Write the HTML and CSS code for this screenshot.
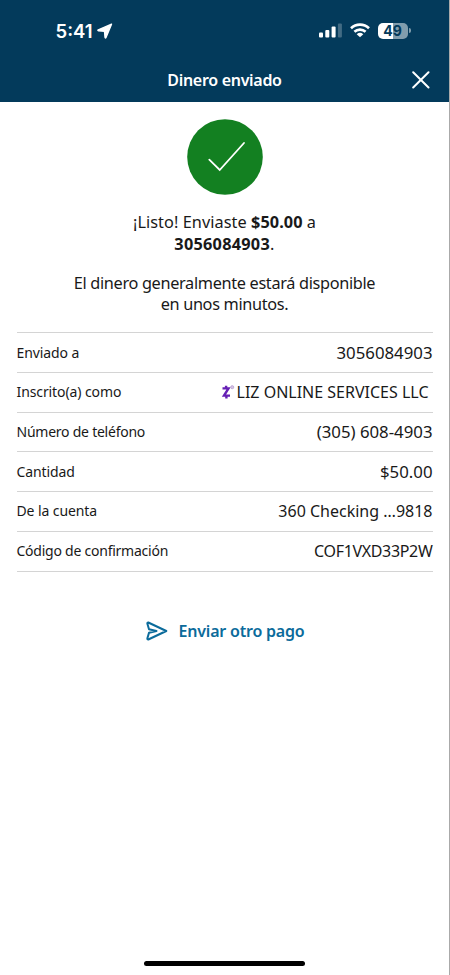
FILE: index.html
```html
<!DOCTYPE html>
<html lang="es">
<head>
<meta charset="utf-8">
<title>Dinero enviado</title>
<link rel="stylesheet" href="styles.css">
</head>
<body>
<div class="screen">
  <header class="header">
    <div class="status">
      <div class="clock"><span class="time">5:41</span>
        <svg class="location" width="16" height="16" viewBox="0 0 16 16"><path d="M14.5 1.2 1.3 6.8q-1 .6.2 1l6 .5.5 6q.4 1.3 1 .2z" fill="#fff" stroke="#fff" stroke-width="1.4" stroke-linejoin="round"/></svg>
      </div>
      <div class="indicators">
        <svg width="23" height="15" viewBox="0 0 23 15" fill="#fff"><rect x="0" y="9.5" width="4" height="5" rx="1"/><rect x="6.3" y="7" width="4" height="7.5" rx="1"/><rect x="12.6" y="3.5" width="4" height="11" rx="1"/><rect x="18.9" y=".5" width="4" height="14" rx="1" opacity=".25"/></svg>
        <svg class="wifi" width="20" height="15" viewBox="0 0 20 15"><g fill="none" stroke="#fff" stroke-width="2.6"><path d="M1 5.2a13 13 0 0 1 18 0"/><path d="M4.4 8.8a8.2 8.2 0 0 1 11.2 0"/></g><path d="M10 14.3 6.7 11.3a5 5 0 0 1 6.6 0z" fill="#fff"/></svg>
        <div class="battery"><span>4</span><span>9</span></div><i class="battery-tip"></i>
      </div>
    </div>
    <div class="titlebar">
      <span></span>
      <h1>Dinero enviado</h1>
      <svg width="18" height="18" viewBox="0 0 18 18"><path d="M1.2 1.2 16.5 16.5M16.5 1.2 1.2 16.5" stroke="#fff" stroke-width="2" stroke-linecap="round"/></svg>
    </div>
  </header>
  <main>
    <svg class="check" width="76" height="76" viewBox="0 0 76 76"><circle cx="38" cy="38" r="37.8" fill="#138021"/><path d="M22.3 40.7 32.7 51 57 24" fill="none" stroke="#fff" stroke-width="1.8" stroke-linecap="round"/></svg>
    <p class="message"><span class="intro">¡Listo! Enviaste <b>$50.00</b> a</span><br><span class="recipient"><b>3056084903</b>.</span></p>
    <p class="message note">El dinero generalmente estará disponible<br>en unos minutos.</p>
    <dl class="details">
      <div><dt>Enviado a</dt><dd class="number">3056084903</dd></div>
      <div><dt>Inscrito(a) como</dt><dd class="payee"><svg width="14" height="16" viewBox="0 0 14 16"><path d="M1.5 4.4H7.5L3 11.6H9M5.1 1.8V4.2M5.4 12V14.4" fill="none" stroke="#6620b5" stroke-width="2.4"/><circle cx="11.2" cy="3.2" r="1.6" fill="#d5c4e5" stroke="#ad92ca" stroke-width=".6"/></svg><span>LIZ ONLINE SERVICES LLC</span></dd></div>
      <div><dt class="tight">Número de teléfono</dt><dd class="number">(305) 608-4903</dd></div>
      <div><dt>Cantidad</dt><dd class="number">$50.00</dd></div>
      <div><dt>De la cuenta</dt><dd>360 Checking …9818</dd></div>
      <div><dt class="tight">Código de confirmación</dt><dd class="code">COF1VXD33P2W</dd></div>
    </dl>
    <a class="again"><svg width="22" height="20" viewBox="0 0 22 20"><path d="M2.3 1.5 20.3 10 2.3 18.5Q1.1 18.6 1.4 17.3L3 11.7 10.5 10 3 8.3 1.4 2.7Q1.1 1.4 2.3 1.5z" fill="none" stroke="#0b6b9b" stroke-width="2" stroke-linejoin="round"/></svg><span>Enviar otro pago</span></a>
  </main>
  <div class="home"></div>
</div>
</body>
</html>
```
FILE: styles.css
```css
* { box-sizing: border-box; }
body { margin: 0; background: #fff; font-family: "Noto Sans", sans-serif; color: #191919; }
.screen { width: 450px; height: 975px; display: flex; flex-direction: column; align-items: center; border-right: 1px solid #aaa; overflow: hidden; }
.header { width: 450px; height: 102px; flex: none; background: #033a5b; color: #fff; }
.status { height: 60px; padding: 1px 39px 0 56px; display: flex; justify-content: space-between; align-items: center; }
.clock { display: flex; align-items: center; gap: 4px; font: 600 18.5px/22px Inter, sans-serif; }
.indicators { display: flex; align-items: center; }
.wifi { margin: 0 8px; }
.battery { width: 30px; height: 16px; border-radius: 5px; background: linear-gradient(90deg, #fff 50%, #819dad 50%); color: #033a5b; font: 700 14px/16px Inter, sans-serif; text-align: center; }
.battery-tip { width: 2px; height: 5px; margin-left: 1px; border-radius: 0 2px 2px 0; background: #819dad; }
.titlebar { height: 39px; padding: 0 20px; display: grid; grid-template-columns: 18px 1fr 18px; align-items: center; }
.titlebar h1 { margin: 1px 0 0; text-align: center; font-size: 16px; line-height: 22px; font-weight: 600; letter-spacing: -.3px; }
main { width: 416px; display: flex; flex-direction: column; align-items: center; }
.check { margin-top: 17px; }
.message { margin: 17px 0 0; font-size: 16.3px; line-height: 21.6px; text-align: center; white-space: nowrap; }
.message b { font-weight: 700; }
.intro { letter-spacing: .06px; }
.recipient { letter-spacing: .25px; }
.note { margin-top: 17.5px; letter-spacing: -.33px; }
.details { width: 416px; margin: 16.5px 0 0; border-top: 1px solid #d4d4d4; }
.details div { height: 39.7px; padding-bottom: 1px; border-bottom: 1px solid #d4d4d4; display: flex; justify-content: space-between; align-items: center; white-space: nowrap; }
.details dt { font-size: 14px; letter-spacing: -.1px; }
.details .tight { letter-spacing: -.24px; }
.details dd { margin: 0; font-size: 16px; }
.details .number { font-size: 16.8px; }
.details .code { letter-spacing: -.33px; }
.payee { display: flex; align-items: center; gap: 2px; padding-right: 4px; }
.again { display: flex; align-items: center; gap: 11px; margin-top: 47px; color: #0b6b9b; font-size: 16px; font-weight: 600; line-height: 24px; letter-spacing: -.2px; }
.again svg { margin-left: 1px; }
.home { width: 161px; height: 5px; margin-top: auto; margin-bottom: 9px; flex: none; border-radius: 3px; background: #000; }
```
